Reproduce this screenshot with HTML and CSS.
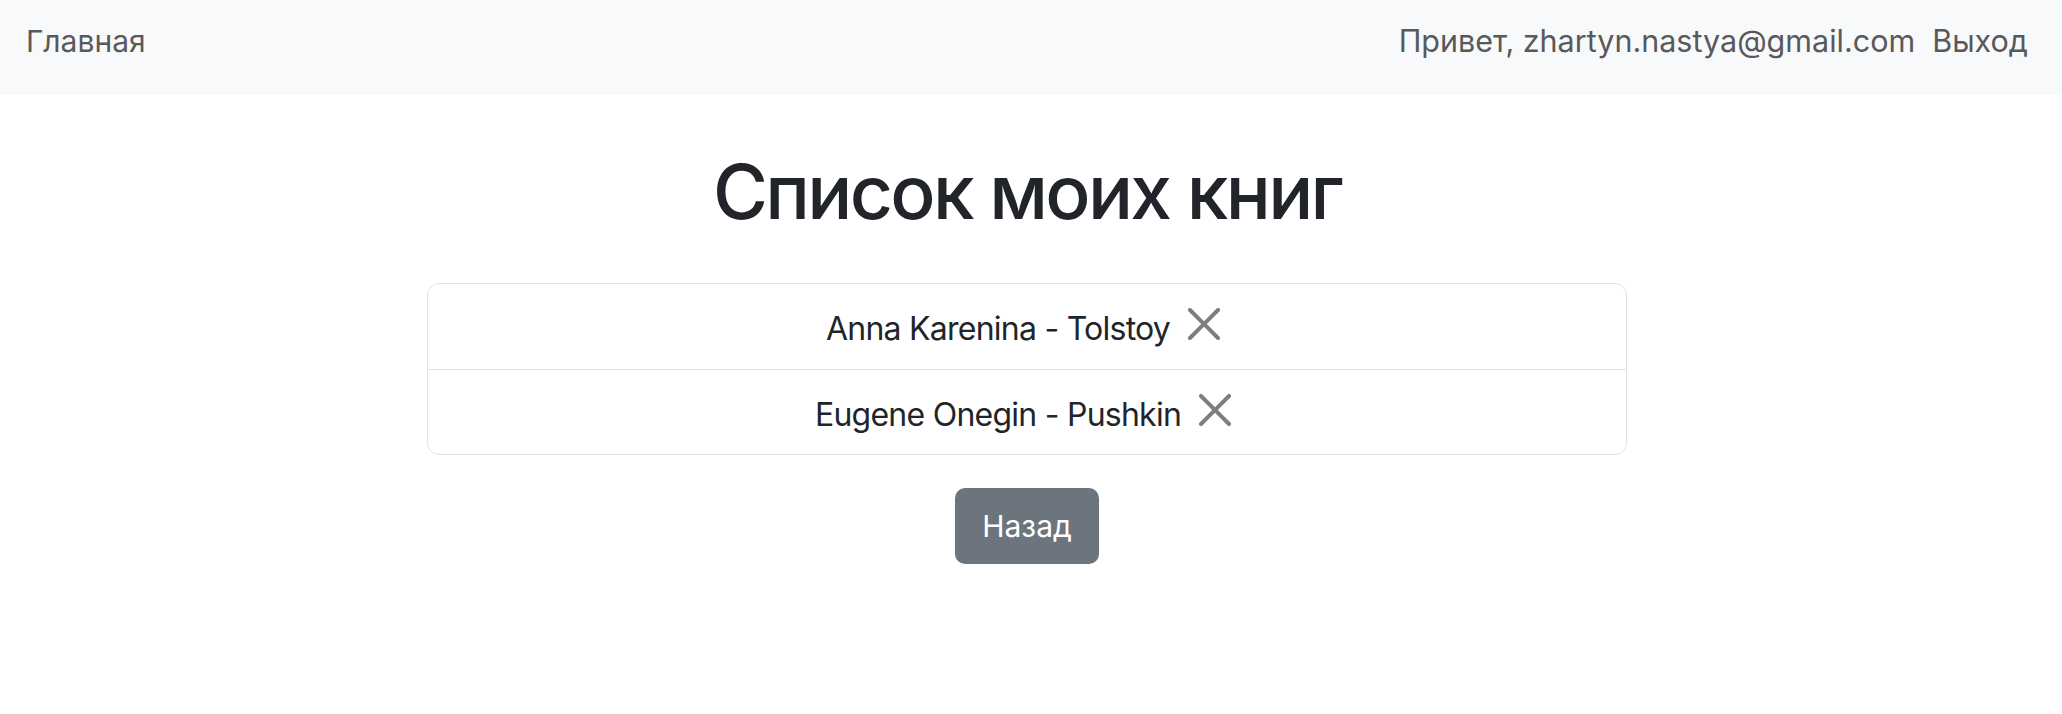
FILE: index.html
```html
<!DOCTYPE html>
<html lang="ru">
<head>
<meta charset="utf-8">
<title>Список моих книг</title>
<link rel="stylesheet" href="styles.css">
</head>
<body>
<nav class="navbar">
  <a class="brand" href="#">Главная</a>
  <div class="nav-right">
    <span class="greet">Привет, zhartyn.nastya@gmail.com</span>
    <a class="logout" href="#">Выход</a>
  </div>
</nav>
<main class="page">
  <h1 class="title">Список моих книг</h1>
  <ul class="books">
    <li class="book">
      <span class="book-name">Anna Karenina - Tolstoy</span>
      <button class="remove" type="button" aria-label="Удалить">
        <svg viewBox="0 0 16 16" width="32" height="32"><path d="M.293.293a1 1 0 0 1 1.414 0L8 6.586 14.293.293a1 1 0 1 1 1.414 1.414L9.414 8l6.293 6.293a1 1 0 0 1-1.414 1.414L8 9.414l-6.293 6.293a1 1 0 0 1-1.414-1.414L6.586 8 .293 1.707a1 1 0 0 1 0-1.414z"/></svg>
      </button>
    </li>
    <li class="book">
      <span class="book-name">Eugene Onegin - Pushkin</span>
      <button class="remove" type="button" aria-label="Удалить">
        <svg viewBox="0 0 16 16" width="32" height="32"><path d="M.293.293a1 1 0 0 1 1.414 0L8 6.586 14.293.293a1 1 0 1 1 1.414 1.414L9.414 8l6.293 6.293a1 1 0 0 1-1.414 1.414L8 9.414l-6.293 6.293a1 1 0 0 1-1.414-1.414L6.586 8 .293 1.707a1 1 0 0 1 0-1.414z"/></svg>
      </button>
    </li>
  </ul>
  <a class="back" href="#">Назад</a>
</main>
</body>
</html>
```

FILE: styles.css
```css
html, body {
  margin: 0;
  padding: 0;
  background: #ffffff;
}

body {
  font-family: Inter, "Noto Sans", "Liberation Sans", sans-serif;
  color: #212529;
}

a {
  text-decoration: none;
}

.navbar {
  display: flex;
  justify-content: space-between;
  align-items: flex-start;
  box-sizing: border-box;
  height: 95px;
  padding: 18px 34px 0 26px;
  background: #f8f9fa;
  font-size: 30.5px;
  line-height: 46px;
  color: #58595a;
}

.brand,
.logout {
  color: #58595a;
}

.brand {
  font-size: 30px;
}

.nav-right {
  display: flex;
  gap: 17px;
}

.page {
  display: flex;
  flex-direction: column;
  align-items: center;
  padding-right: 8px;
}

.title {
  margin: 51px 0 46px;
  font-size: 75px;
  line-height: 91px;
  font-weight: 500;
  letter-spacing: -2.7px;
  color: #212529;
}

.books {
  box-sizing: border-box;
  width: 1200px;
  margin: 0;
  padding: 0;
  list-style: none;
  border: 1px solid #dee2e6;
  border-radius: 12px;
}

.book {
  display: flex;
  justify-content: center;
  align-items: center;
  height: 84.5px;
  font-size: 32px;
  line-height: 48px;
  letter-spacing: -0.75px;
  color: #212529;
}

.book + .book {
  border-top: 1px solid #dee2e6;
}

.book-name {
  padding-top: 6px;
}

.remove {
  display: flex;
  box-sizing: content-box;
  width: 32px;
  height: 32px;
  margin: 0 0 4px 10px;
  padding: 8px;
  border: 0;
  background: none;
  opacity: 0.5;
  cursor: pointer;
}

.remove svg {
  fill: #000000;
}

.back {
  display: inline-flex;
  align-items: center;
  box-sizing: border-box;
  height: 76px;
  margin-top: 33px;
  padding: 0 27px;
  background: #6c757d;
  color: #ffffff;
  border-radius: 10px;
  font-size: 30px;
}
```
